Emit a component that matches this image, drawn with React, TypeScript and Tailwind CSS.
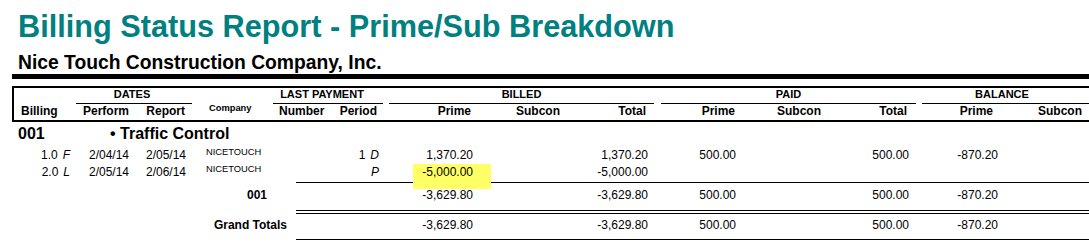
import React from "react";

const COLS = "grid grid-cols-[62px_58px_58px_81px_57px_59px_91px_90px_85px_90px_105px_66px_94px_100px]";

type Line = {
  billing: string;
  flag: string;
  perform: string;
  report: string;
  company: string;
  period: string;
  periodFlag: string;
  bPrime: string;
  bTotal: string;
  pPrime: string;
  pTotal: string;
  balPrime: string;
  highlight?: boolean;
};

const LINES: Line[] = [
  { billing: "1.0", flag: "F", perform: "2/04/14", report: "2/05/14", company: "NICETOUCH", period: "1", periodFlag: "D", bPrime: "1,370.20", bTotal: "1,370.20", pPrime: "500.00", pTotal: "500.00", balPrime: "-870.20" },
  { billing: "2.0", flag: "L", perform: "2/05/14", report: "2/06/14", company: "NICETOUCH", period: "", periodFlag: "P", bPrime: "-5,000.00", bTotal: "-5,000.00", pPrime: "", pTotal: "", balPrime: "", highlight: true },
];

function Totals({ label, pr }: { label: string; pr: string }) {
  return (
    <div className={`${COLS} h-[17px] leading-[17px] text-[12px]`}>
      <div className={`col-span-2 col-start-4 text-right font-bold whitespace-nowrap ${pr}`}>{label}</div>
      <div />
      <div className="text-right pr-[7px]">-3,629.80</div>
      <div />
      <div className="text-right pr-[7px]">-3,629.80</div>
      <div className="text-right pr-[9px]">500.00</div>
      <div />
      <div className="text-right pr-[7px]">500.00</div>
      <div className="text-right pr-[12px]">-870.20</div>
      <div />
    </div>
  );
}

export default function App() {
  return (
    <div className="w-[1089px] h-[242px] overflow-hidden bg-white text-black font-['Liberation_Sans',Arial,sans-serif]">
      <div className="w-[1110px] pl-[12px] pt-[11.5px]">
        {/* Heading */}
        <h1 className="ml-[6px] text-[30.7px] leading-[30.5px] font-bold text-[#008080] whitespace-nowrap">Billing Status Report - Prime/Sub Breakdown</h1>
        <h2 className="ml-[6px] mt-[10.5px] text-[19.3px] leading-[19.3px] font-bold whitespace-nowrap">Nice Touch Construction Company, Inc.</h2>
        <div className="mt-[2px] h-[5px] bg-black" />

        {/* Column header box */}
        <div className="mt-[7px] border-l-2 border-t-2 border-b-2 border-black">
          <div className={`${COLS} text-[11px] leading-[11px] font-bold`}>
            <div />
            <div className="col-span-2 h-[16px] border-b border-black text-center pt-[1px] pr-[4px]">DATES</div>
            <div />
            <div className="col-span-2 h-[16px] mr-[6px] border-b border-black text-center pt-[1px] pr-[12px]">LAST PAYMENT</div>
            <div className="col-span-3 h-[16px] mr-[1px] border-b border-black text-center pt-[1px]">BILLED</div>
            <div className="col-span-3 h-[16px] ml-[6px] border-b border-black text-center pt-[1px]">PAID</div>
            <div className="col-span-2 h-[16px] ml-[6px] border-b border-black text-center pt-[1px] pr-[28px]">BALANCE</div>
          </div>
          <div className={`${COLS} h-[16px] text-[12px] leading-[12px] font-bold items-start`}>
            <div className="pl-[7px] pt-[1.5px]">Billing</div>
            <div className="text-right pr-[5px] pt-[1.5px]">Perform</div>
            <div className="text-right pr-[7px] pt-[1.5px]">Report</div>
            <div className="pl-[17px] text-[9.33px] leading-[9.33px] pt-[0.5px]">Company</div>
            <div className="pl-[6px] pt-[1.5px]">Number</div>
            <div className="text-right pr-[12px] pt-[1.5px]">Period</div>
            <div className="text-right pr-[9px] pt-[1.5px]">Prime</div>
            <div className="pl-[36px] pt-[1.5px]">Subcon</div>
            <div className="text-right pr-[9px] pt-[1.5px]">Total</div>
            <div className="text-right pr-[10px] pt-[1.5px]">Prime</div>
            <div className="pl-[32px] pt-[1.5px]">Subcon</div>
            <div className="text-right pr-[9px] pt-[1.5px]">Total</div>
            <div className="text-right pr-[17px] pt-[1.5px]">Prime</div>
            <div className="pl-[28px] pt-[1.5px]">Subcon</div>
          </div>
        </div>

        {/* Body */}
        <div className="ml-[2px]">
          <div className="flex h-[25px] pt-[4px] text-[16px] leading-[16px] font-bold">
            <div className="w-[96px] pl-[4px]">001</div>
            <div>• Traffic Control</div>
          </div>

          {LINES.map((l, i) => (
            <div key={i} className={`${COLS} ${i === LINES.length - 1 ? "h-[18px]" : "h-[17px]"} text-[12px] leading-[17px] items-start`}>
              <div className="text-right pr-[6px]">{l.billing}<i className="ml-[5px]">{l.flag}</i></div>
              <div className="text-right pr-[5px]">{l.perform}</div>
              <div className="text-right pr-[6px]">{l.report}</div>
              <div className="pl-[14px] text-[9.33px] leading-[9.33px] pt-[1.5px]">{l.company}</div>
              <div />
              <div className="text-right pr-[10px]">{l.period && <span className="mr-[5px]">{l.period}</span>}<i>{l.periodFlag}</i></div>
              <div className="relative text-right pr-[7px]">
                {l.highlight && <div className="absolute left-[24px] top-0 w-[78px] h-[25px] bg-[#ffff66] z-10" />}
                <span className="relative z-20">{l.bPrime}</span>
              </div>
              <div />
              <div className="text-right pr-[7px]">{l.bTotal}</div>
              <div className="text-right pr-[9px]">{l.pPrime}</div>
              <div />
              <div className="text-right pr-[7px]">{l.pTotal}</div>
              <div className="text-right pr-[12px]">{l.balPrime}</div>
              <div />
            </div>
          ))}

          <div className="ml-[282px] border-t border-black" />
          <div className="pt-[4px] pb-[6px]">
            <Totals label="001" pr="pr-[63px]" />
          </div>
          <div className="ml-[282px] h-[4px] border-t border-b border-black" />
          <div className="pt-[3px] pb-[5px]">
            <Totals label="Grand Totals" pr="pr-[43px]" />
          </div>
          <div className="ml-[282px] border-t border-black" />
        </div>
      </div>
    </div>
  );
}
